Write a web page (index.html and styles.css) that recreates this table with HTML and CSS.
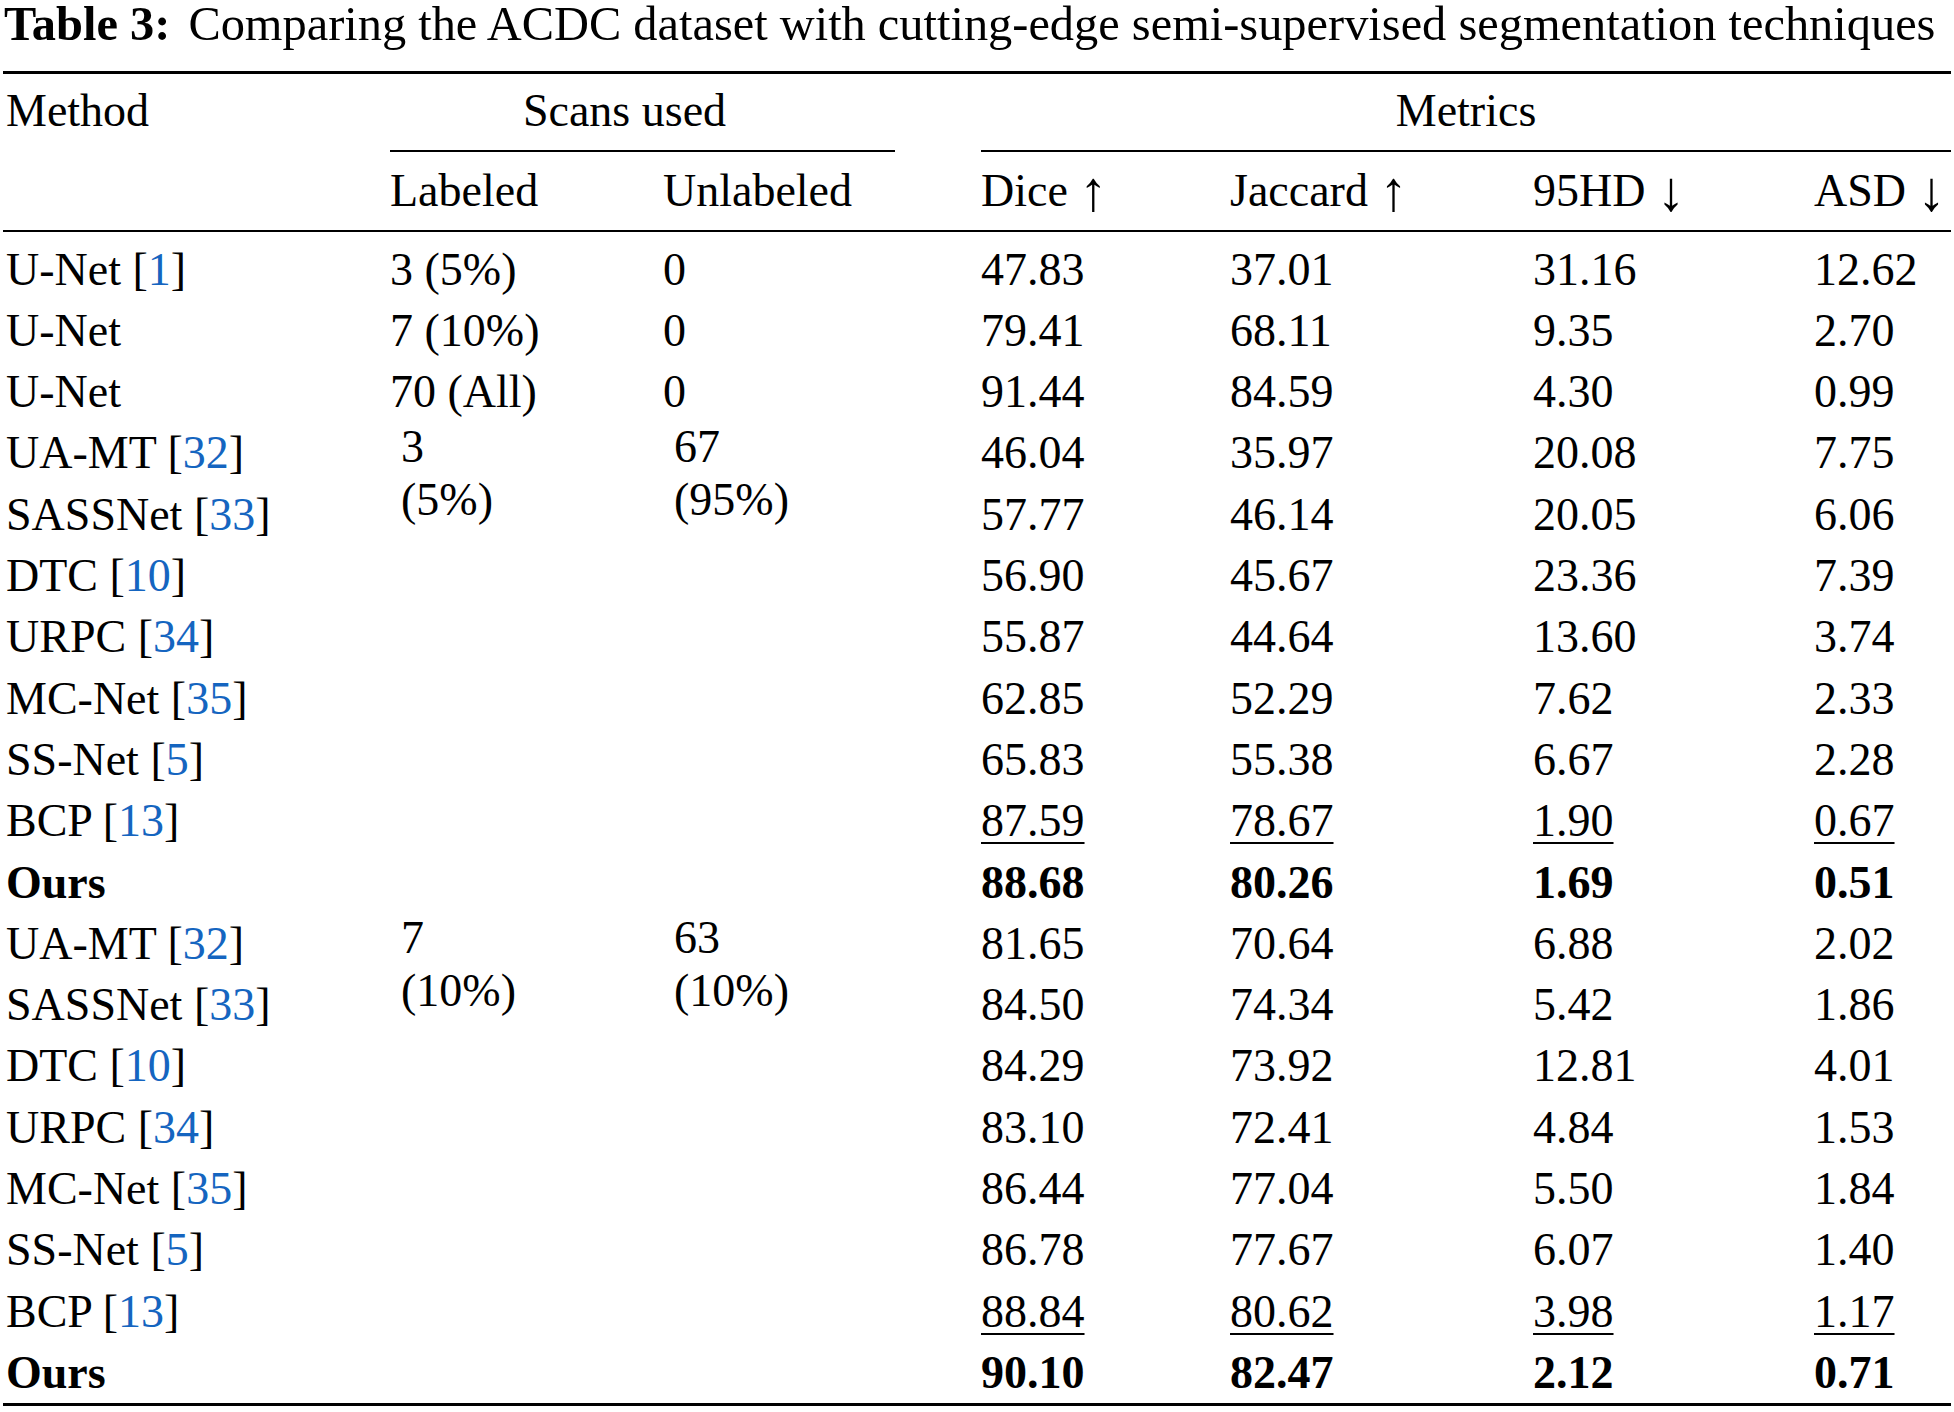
FILE: index.html
```html
<!DOCTYPE html>
<html lang="en">
<head>
<meta charset="utf-8">
<title>Table 3</title>
<link rel="stylesheet" href="styles.css">
</head>
<body>
<div class="page">
<p class="caption"><b class="cap-label">Table 3:</b> Comparing the ACDC dataset with cutting-edge semi-supervised segmentation techniques</p>
<table class="results">
<colgroup>
<col class="c-method"><col class="c-lab"><col class="c-unlab"><col class="c-gap"><col class="c-dice"><col class="c-jac"><col class="c-hd"><col class="c-asd">
</colgroup>
<thead>
<tr class="h1">
<th class="first">Method</th>
<th colspan="2" class="group scans">Scans used</th>
<th></th>
<th colspan="4" class="group metrics">Metrics</th>
</tr>
<tr class="h2">
<th class="first"></th><th>Labeled</th><th>Unlabeled</th><th></th><th>Dice <span class="arrow">↑</span></th><th>Jaccard <span class="arrow">↑</span></th><th>95HD <span class="arrow">↓</span></th><th>ASD <span class="arrow">↓</span></th>
</tr>
</thead>
<tbody>
<tr class="r1"><td class="first">U-Net [<a class="ref">1</a>]</td><td>3 (5%)</td><td>0</td><td></td><td>47.83</td><td>37.01</td><td>31.16</td><td>12.62</td></tr>
<tr><td class="first">U-Net</td><td>7 (10%)</td><td>0</td><td></td><td>79.41</td><td>68.11</td><td>9.35</td><td>2.70</td></tr>
<tr><td class="first">U-Net</td><td>70 (All)</td><td>0</td><td></td><td>91.44</td><td>84.59</td><td>4.30</td><td>0.99</td></tr>
<tr><td class="first">UA-MT [<a class="ref">32</a>]</td><td rowspan="8" class="merged"><div class="stack">3<br>(5%)</div></td><td rowspan="8" class="merged"><div class="stack">67<br>(95%)</div></td><td></td><td>46.04</td><td>35.97</td><td>20.08</td><td>7.75</td></tr>
<tr><td class="first">SASSNet [<a class="ref">33</a>]</td><td></td><td>57.77</td><td>46.14</td><td>20.05</td><td>6.06</td></tr>
<tr><td class="first">DTC [<a class="ref">10</a>]</td><td></td><td>56.90</td><td>45.67</td><td>23.36</td><td>7.39</td></tr>
<tr><td class="first">URPC [<a class="ref">34</a>]</td><td></td><td>55.87</td><td>44.64</td><td>13.60</td><td>3.74</td></tr>
<tr><td class="first">MC-Net [<a class="ref">35</a>]</td><td></td><td>62.85</td><td>52.29</td><td>7.62</td><td>2.33</td></tr>
<tr><td class="first">SS-Net [<a class="ref">5</a>]</td><td></td><td>65.83</td><td>55.38</td><td>6.67</td><td>2.28</td></tr>
<tr><td class="first">BCP [<a class="ref">13</a>]</td><td></td><td><span class="second">87.59</span></td><td><span class="second">78.67</span></td><td><span class="second">1.90</span></td><td><span class="second">0.67</span></td></tr>
<tr class="ours"><td class="first">Ours</td><td></td><td>88.68</td><td>80.26</td><td>1.69</td><td>0.51</td></tr>
<tr><td class="first">UA-MT [<a class="ref">32</a>]</td><td rowspan="8" class="merged"><div class="stack">7<br>(10%)</div></td><td rowspan="8" class="merged"><div class="stack">63<br>(10%)</div></td><td></td><td>81.65</td><td>70.64</td><td>6.88</td><td>2.02</td></tr>
<tr><td class="first">SASSNet [<a class="ref">33</a>]</td><td></td><td>84.50</td><td>74.34</td><td>5.42</td><td>1.86</td></tr>
<tr><td class="first">DTC [<a class="ref">10</a>]</td><td></td><td>84.29</td><td>73.92</td><td>12.81</td><td>4.01</td></tr>
<tr><td class="first">URPC [<a class="ref">34</a>]</td><td></td><td>83.10</td><td>72.41</td><td>4.84</td><td>1.53</td></tr>
<tr><td class="first">MC-Net [<a class="ref">35</a>]</td><td></td><td>86.44</td><td>77.04</td><td>5.50</td><td>1.84</td></tr>
<tr><td class="first">SS-Net [<a class="ref">5</a>]</td><td></td><td>86.78</td><td>77.67</td><td>6.07</td><td>1.40</td></tr>
<tr><td class="first">BCP [<a class="ref">13</a>]</td><td></td><td><span class="second">88.84</span></td><td><span class="second">80.62</span></td><td><span class="second">3.98</span></td><td><span class="second">1.17</span></td></tr>
<tr class="ours"><td class="first">Ours</td><td></td><td>90.10</td><td>82.47</td><td>2.12</td><td>0.71</td></tr>
</tbody>
</table>
</div>
</body>
</html>
```

FILE: styles.css
```css
html, body {
  margin: 0;
  padding: 0;
  background: #ffffff;
}

.page {
  padding: 2px 0 0 3px;
  font-family: "Liberation Serif", "Times New Roman", serif;
  color: #000000;
}

.caption {
  margin: 0 0 25px 1px;
  font-size: 48.4px;
  line-height: 44px;
  white-space: nowrap;
}

.cap-label {
  font-weight: bold;
  margin-right: 6px;
}

.results {
  table-layout: fixed;
  width: 1948px;
  border-collapse: separate;
  border-spacing: 0;
  border-top: 3px solid #000;
  border-bottom: 3px solid #000;
  font-size: 46px;
  line-height: 61.3px;
}

.c-method { width: 387px; }
.c-lab { width: 273px; }
.c-unlab { width: 232px; }
.c-gap { width: 86px; }
.c-dice { width: 249px; }
.c-jac { width: 303px; }
.c-hd { width: 281px; }
.c-asd { width: 137px; }

.results th,
.results td {
  padding: 0;
  text-align: left;
  vertical-align: top;
  font-weight: normal;
  white-space: nowrap;
}

.results .first {
  padding-left: 3px;
}

.h1 th {
  padding-top: 6px;
  padding-bottom: 9px;
}

.h1 .group {
  border-bottom: 2px solid #000;
  text-align: center;
}

.h1 .scans {
  padding-right: 36px;
}

.h2 th {
  padding-top: 8px;
  padding-bottom: 8px;
  border-bottom: 2px solid #000;
}

.arrow {
  font-size: 56px;
  line-height: 0;
  vertical-align: -4px;
}

.r1 td {
  padding-top: 7px;
}

.ref {
  color: #1565c0;
  text-decoration: none;
}

.merged {
  padding-left: 11px !important;
}

.stack {
  line-height: 53px;
  margin-top: -2px;
}

.second {
  text-decoration: underline;
  text-decoration-thickness: 2px;
  text-underline-offset: 6px;
}

.ours td {
  font-weight: bold;
}
```
